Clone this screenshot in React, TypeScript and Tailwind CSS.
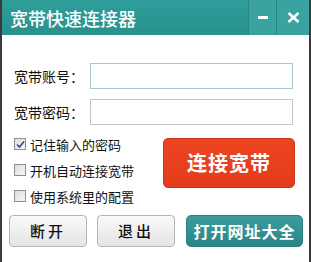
import React from "react";

const font = { fontFamily: '"Noto Sans CJK SC", "Noto Sans", sans-serif' };

const CheckRow: React.FC<{ label: string; checked?: boolean }> = ({ label, checked }) => (
  <div className="flex items-center h-[26px]">
    <div className="w-[12px] h-[12px] border border-[#8e8f8f] bg-gradient-to-br from-[#dcdcdc] to-[#f7f7f7] flex items-center justify-center">
      {checked && (
        <svg width="9" height="9" viewBox="0 0 9 9">
          <path d="M1 4.5 L3.5 7 L8 1.5" fill="none" stroke="#2a4a8a" strokeWidth="1.6" />
        </svg>
      )}
    </div>
    <span className="ml-[4px] text-[13px] text-[#111] leading-none">{label}</span>
  </div>
);

const GrayButton: React.FC<{ label: string }> = ({ label }) => (
  <button className="w-[78px] h-[32px] rounded-[4px] border border-[#b5b5b5] bg-gradient-to-b from-[#fafafa] to-[#e4e4e4] text-[15px] font-medium text-[#111] tracking-[3px]">
    {label}
  </button>
);

export default function App() {
  return (
    <div className="w-[311px] h-[262px] bg-[#3a3a3a] px-[2px]" style={font}>
      <div className="w-[307px] h-[262px] bg-white flex flex-col">
        <div className="h-[35px] bg-gradient-to-b from-[#2f9e9b] to-[#28908d] flex items-center">
          <span className="ml-[8px] text-white text-[18px] font-medium leading-none">宽带快速连接器</span>
          <div className="ml-auto flex h-full">
            <div className="w-[28px] h-full bg-[#3aa3a0] border-l border-[#2b8683] flex items-center justify-center">
              <div className="w-[10px] h-[3px] bg-white" />
            </div>
            <div className="w-[33px] h-full bg-[#3aa3a0] border-l border-[#2b8683] flex items-center justify-center">
              <svg width="13" height="11" viewBox="0 0 13 11">
                <path d="M1.5 1 L11.5 10 M11.5 1 L1.5 10" stroke="white" strokeWidth="2.6" />
              </svg>
            </div>
          </div>
        </div>

        <div className="flex flex-col gap-[10px] pt-[28px] pl-[12px]">
          <div className="flex items-center">
            <span className="w-[76px] text-[14px] text-[#111]">宽带账号：</span>
            <div className="w-[203px] h-[26px] border border-[#a9c7d0] bg-white" />
          </div>
          <div className="flex items-center">
            <span className="w-[76px] text-[14px] text-[#111]">宽带密码：</span>
            <div className="w-[203px] h-[26px] border border-[#c5c5c5] bg-white" />
          </div>
        </div>

        <div className="flex pl-[12px] mt-[6px]">
          <div className="flex flex-col w-[149px]">
            <CheckRow label="记住输入的密码" checked />
            <CheckRow label="开机自动连接宽带" />
            <CheckRow label="使用系统里的配置" />
          </div>
          <button className="mt-[7px] w-[132px] h-[50px] rounded-[5px] border border-[#c8361a] bg-gradient-to-b from-[#ee4521] to-[#e13c1a] text-white text-[20px] font-bold tracking-[1px]">
            连接宽带
          </button>
        </div>

        <div className="flex items-center pl-[7px] mt-[6px]">
          <GrayButton label="断开" />
          <div className="w-[10px]" />
          <GrayButton label="退出" />
          <button className="ml-[11px] w-[117px] h-[32px] rounded-[5px] border border-[#2a7f80] bg-gradient-to-b from-[#3a9d9d] to-[#2b8586] text-white text-[16px] font-bold tracking-[1px]">
            打开网址大全
          </button>
        </div>
      </div>
    </div>
  );
}
